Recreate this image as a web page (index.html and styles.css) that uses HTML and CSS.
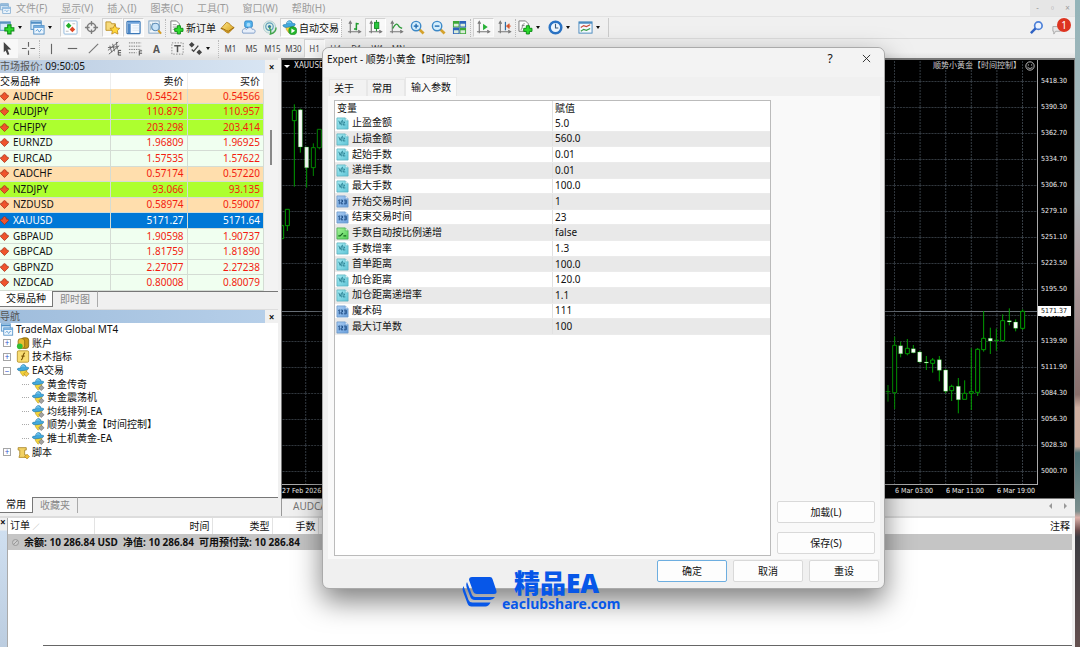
FILE: index.html
```html
<!DOCTYPE html>
<html lang="zh-CN">
<head>
<meta charset="utf-8">
<title>TradeMax Global MT4</title>
<link rel="stylesheet" href="styles.css">
</head>
<body>
<svg class="defs" aria-hidden="true">
  <defs>
    <linearGradient id="g-teal" x2="1" y2="1"><stop offset="0" stop-color="#a5eaf2"/><stop offset="1" stop-color="#5fc4d6"/></linearGradient>
    <linearGradient id="g-blue" x2="1" y2="1"><stop offset="0" stop-color="#a9cdf3"/><stop offset="1" stop-color="#6a9fdc"/></linearGradient>
    <linearGradient id="g-green" x2="1" y2="1"><stop offset="0" stop-color="#a6f29a"/><stop offset="1" stop-color="#52cf55"/></linearGradient>
    <linearGradient id="g-gold" x2="1" y2="1"><stop offset="0" stop-color="#ffe88a"/><stop offset="1" stop-color="#d39a12"/></linearGradient>
  </defs>
  <symbol id="plus" viewBox="0 0 10 10"><path d="M3.500 1h3v2.500h2.500v3h-2.500v2.500h-3v-2.500h-2.500v-3h2.500z" fill="#2edc2e" stroke="#0a8a14" stroke-width=".9"/></symbol>
  <symbol id="windows" viewBox="0 0 16 16"><rect x="1" y="1" width="11" height="9" fill="#d9ecfb" stroke="#4f8ec4"/><path d="M1 3h11" stroke="#4f8ec4" stroke-width="2"/><rect x="4" y="6" width="11" height="9" fill="#eef7ff" stroke="#4f8ec4"/><path d="M4 7.500h11" stroke="#6ba7dc" stroke-width="2"/><path d="M6 12l2-2 2 3 2-3 1 1" fill="none" stroke="#5a9ad0"/></symbol>
  <symbol id="newchart" viewBox="0 0 16 16"><rect x="0" y="2" width="11" height="9" fill="#d7eafa" stroke="#5a94c0"/><path d="M0 3h11" stroke="#5a94c0" stroke-width="2"/><use href="#plus" x="4" y="4" width="12" height="12"/></symbol>
  <symbol id="watch" viewBox="0 0 16 16"><rect x="1" y="1" width="14" height="14" rx="1" fill="#fff" stroke="#8fb8dc"/><path d="M6 3l3 3-3 3-3-3z" fill="#21b02b"/><path d="M10 7l3 3-3 3-3-3z" fill="#df4b29"/><path d="M10 4h3M3 12h3" stroke="#bbb"/></symbol>
  <symbol id="target" viewBox="0 0 16 16"><circle cx="8" cy="8" r="4.500" fill="none" stroke="#7d7d7d" stroke-width="1.600"/><path d="M8 1v5M8 10v5M1 8h5M10 8h5" stroke="#7d7d7d" stroke-width="1.400"/></symbol>
  <symbol id="favfolder" viewBox="0 0 16 16"><path d="M1 2h5l1 2h4v7h-10z" fill="#f7db7d" stroke="#be932a"/><path d="M10.500 5l1.700 3.400 3.600.500-2.600 2.500.6 3.600-3.300-1.700-3.300 1.700.6-3.600-2.600-2.500 3.700-.5z" fill="#ffd83c" stroke="#b98317" stroke-width=".8"/></symbol>
  <symbol id="navi" viewBox="0 0 16 16"><rect x="1" y="1.500" width="14" height="13" rx="1" fill="#f5faff" stroke="#3b78b8" stroke-width="1.300"/><path d="M2 3h12" stroke="#70a5dc" stroke-width="2"/><rect x="2" y="4" width="3" height="10" fill="#4f89c7"/><path d="M7 6h7M7 8.500h7M7 11h7" stroke="#dbe5f0"/></symbol>
  <symbol id="tester" viewBox="0 0 16 16"><rect x="2" y="1" width="11" height="13" fill="#f3f8fc" stroke="#7ba2c3"/><path d="M4 4v7M6 3v6" stroke="#8ab"/><circle cx="9" cy="7.500" r="4" fill="#c6e2f7" stroke="#5a8bb5" stroke-width="1.200"/><path d="M12 11l3 3.500" stroke="#d59b22" stroke-width="2.200"/></symbol>
  <symbol id="neworder" viewBox="0 0 16 16"><path d="M2 1h6l3 3v10h-9z" fill="#fff" stroke="#777"/><path d="M4 5h4M4 7.500h5M4 10h3" stroke="#999"/><use href="#plus" x="5" y="5" width="11" height="11"/></symbol>
  <symbol id="gold" viewBox="0 0 16 16"><path d="M1 9l6-6.500c4 .5 5 5 8 5.500l-6 6c-3-.5-5-4-8-5z" fill="url(#g-gold)" stroke="#a8700c" stroke-width=".8"/><path d="M1 9c4 0 5 3 8 3l6-4" fill="none" stroke="#9a6509"/></symbol>
  <symbol id="user" viewBox="0 0 16 16"><rect x="4" y="1" width="8" height="7" rx="1.500" fill="#55b5ee" stroke="#2d83c4"/><circle cx="8" cy="5" r="2" fill="#a7dcfa"/><path d="M2 14c-2-4 2-6 4-4 2-3 6-2 6 0 3-1 4 3 2 4z" fill="#e7effa" stroke="#7f9dc8"/></symbol>
  <symbol id="signal" viewBox="0 0 16 16"><circle cx="8" cy="7.500" r="6.500" fill="#dcefe6" stroke="#b3cccf"/><circle cx="8" cy="7" r="4" fill="none" stroke="#5f9dbb" stroke-width="1.300"/><circle cx="8" cy="7" r="1.700" fill="#367da0"/><path d="M8 8c1 2 2 4 1 7 4-1 6-3 6-7" fill="none" stroke="#42a64b" stroke-width="1.500"/></symbol>
  <symbol id="ea" viewBox="0 0 16 16"><path d="M4 7h9l-1 5-4 3-3-4z" fill="#f3d43c" stroke="#b38c1e" stroke-width=".6"/><path d="M1 6c1-1 3-1 4-1 0-5 6-6 7-1 2 0 3 0 3 1 0 2-4 3-7 3-4 1-7 0-7-2z" fill="#43a9dd" stroke="#1d75a8" stroke-width=".7"/><path d="M6 3c1-1 3-1 4 0" stroke="#a8e2fb" fill="none"/></symbol>
  <symbol id="autotrade" viewBox="0 0 16 16"><use href="#ea" width="15" height="15"/><circle cx="11.500" cy="11.500" r="4.300" fill="#23b52c" stroke="#118019" stroke-width=".6"/><path d="M10 9l4 2.500-4 2.500z" fill="#fff"/></symbol>
  <symbol id="eachild" viewBox="0 0 16 16"><use href="#ea" width="16" height="16"/><path d="M12 9l3.500 3-3.500 3.500-3-3.500z" fill="#a2a2a2" stroke="#666" stroke-width=".7"/></symbol>
  <symbol id="eagroup" viewBox="0 0 16 16"><use href="#ea" width="16" height="16"/><path d="M12 9l3.500 3-3.500 3.500-3-3.500z" fill="#f4ca42" stroke="#a57b15" stroke-width=".7"/></symbol>
  <symbol id="axis" viewBox="0 0 16 16"><path d="M3.500 2v12M1 12.500h13M2 4l1.500-2.500 1.500 2.500M12 11l2.500 1.500-2.500 1.500" fill="none" stroke="#7a7a7a" stroke-width="1.200"/></symbol>
  <symbol id="bars" viewBox="0 0 16 16"><use href="#axis" width="16" height="16"/><path d="M10 3v8M10 4h2.500M7.500 9.500h2.500" stroke="#229c30" stroke-width="1.600"/></symbol>
  <symbol id="candles" viewBox="0 0 16 16"><use href="#axis" width="16" height="16"/><path d="M9 0v12" stroke="#168c25"/><rect x="7" y="2.500" width="4.500" height="6.500" fill="#28c83c" stroke="#168c25"/></symbol>
  <symbol id="line" viewBox="0 0 16 16"><use href="#axis" width="16" height="16"/><path d="M4 9c3-6 5-5 6-3s2 2 4 3" fill="none" stroke="#2e9b3a" stroke-width="1.400"/></symbol>
  <symbol id="lens" viewBox="0 0 16 16"><path d="M10 10l4.500 4.500" stroke="#d7a42d" stroke-width="3"/><circle cx="6.500" cy="6.500" r="5" fill="#d5effd" stroke="#3e8ac8" stroke-width="1.500"/><path d="M4 6.500h5" stroke="#246db2" stroke-width="1.500"/></symbol>
  <symbol id="zoomin" viewBox="0 0 16 16"><use href="#lens" width="16" height="16"/><path d="M6.500 4v5" stroke="#246db2" stroke-width="1.500"/></symbol>
  <symbol id="tiles" viewBox="0 0 16 16"><path d="M1 1h7v7h-7zM8 8h7v7h-7z" fill="#3ca838"/><path d="M8 1h7v7h-7zM1 8h7v7h-7z" fill="#2d64bd"/><path d="M2 4h5v3h-5zM9 4h5v3h-5zM2 11h5v3h-5zM9 11h5v3h-5z" fill="#dceeda"/></symbol>
  <symbol id="scroll" viewBox="0 0 16 16"><use href="#axis" width="16" height="16"/><path d="M7.500 4l5 3.500-5 3.500z" fill="#28b238"/></symbol>
  <symbol id="shift" viewBox="0 0 16 16"><use href="#axis" width="16" height="16"/><path d="M9 2v9" stroke="#2e6da6" stroke-width="1.300"/><path d="M15 6.500h-3M13 4l-3 2.500 3 2.500z" fill="#d7572c" stroke="#d7572c" stroke-width=".8"/></symbol>
  <symbol id="indicator" viewBox="0 0 16 16"><path d="M1 1h7l3 3v8h-10z" fill="#fff" stroke="#777"/><path d="M7 4c-3-1-2 7-4 6M4 6h3" fill="none" stroke="#777"/><use href="#plus" x="5" y="5" width="11" height="11"/></symbol>
  <symbol id="clock" viewBox="0 0 16 16"><circle cx="8" cy="8" r="6.200" fill="#eef7ff" stroke="#2b74c5" stroke-width="2.600"/><path d="M8 4v4.500h3" fill="none" stroke="#3d5d7c" stroke-width="1.200"/></symbol>
  <symbol id="template" viewBox="0 0 16 16"><rect x="1" y="2" width="14" height="12" fill="#f5faff" stroke="#4b8cc0"/><path d="M1 3h14" stroke="#4b8cc0" stroke-width="2"/><path d="M3 8l3-2 3 1 4-2" fill="none" stroke="#c94a38" stroke-width="1.200"/><path d="M3 12l3-2 3 1 4-2" fill="none" stroke="#369d46" stroke-width="1.200"/></symbol>
  <symbol id="cursor" viewBox="0 0 16 16"><path d="M4 1l8 8h-4l2 5-2 1-2-5-2 2z" fill="#444"/></symbol>
  <symbol id="cross" viewBox="0 0 16 16"><path d="M8 1v5M8 10v5M1 8h5M10 8h5" stroke="#666" stroke-width="1.200"/></symbol>
  <symbol id="vline" viewBox="0 0 16 16"><path d="M8 3v11" stroke="#666" stroke-width="1.200"/></symbol>
  <symbol id="hline" viewBox="0 0 16 16"><path d="M3 8h10" stroke="#666" stroke-width="1.200"/></symbol>
  <symbol id="trend" viewBox="0 0 16 16"><path d="M3 13l10-10" stroke="#777" stroke-width="1.200"/></symbol>
  <symbol id="channel" viewBox="0 0 16 16"><path d="M1 10l11-9M2 14l11-9M3 5l2 7M6 3l2 8M10 1l1 8M1 7l11-1" stroke="#666"/><path d="M15 10h-3v5h3M12 12.500h3" fill="none" stroke="#444"/></symbol>
  <symbol id="fibo" viewBox="0 0 16 16"><path d="M1 2h13M1 5.500h13M1 9h13M1 12.500h8" stroke="#777" stroke-dasharray="1.500 1"/><path d="M15 10.500h-3v5M12 13h3" fill="none" stroke="#444"/></symbol>
  <symbol id="textbox" viewBox="0 0 16 16"><rect x="2" y="2" width="12" height="12" fill="none" stroke="#888" stroke-dasharray="1.500 1.500"/><path d="M4.500 5h7M8 5v7" stroke="#555" stroke-width="1.600"/></symbol>
  <symbol id="shapes" viewBox="0 0 16 16"><path d="M4 1l3 3-3 3-3-3zM12 9l3 3-3 3-3-3z" fill="#444"/><path d="M4 9l2 2 5-6" fill="none" stroke="#444" stroke-width="1.400"/></symbol>
  <symbol id="down" viewBox="0 0 10 10"><path d="M5 .5l2 1.500v1.500h2l.5 1.500-4.500 4.500-4.500-4.500.5-1.500h2v-1.500z" fill="#f0542c" stroke="#a52a12" stroke-width=".8"/></symbol>
  <symbol id="accounts" viewBox="0 0 16 16"><rect x="6" y="1" width="9" height="13" rx="3" fill="#c79516" stroke="#80610b"/><rect x="2" y="2" width="8" height="12" rx="3" fill="#e9bd32" stroke="#8f6c10"/><circle cx="4" cy="11.500" r="3.500" fill="#31bd35"/></symbol>
  <symbol id="func" viewBox="0 0 16 16"><rect x="1" y="1" width="14" height="14" rx="1.500" fill="#f8dd72" stroke="#b28b23"/><path d="M10.500 4c-3-1-2 8-5 8M6 7.500h4" fill="none" stroke="#7d5708" stroke-width="1.400"/></symbol>
  <symbol id="script" viewBox="0 0 16 16"><path d="M2 2h10v3h-2v6h2l1 3h-10l1-3v-6h-2z" fill="#f2d265" stroke="#a98424"/><path d="M13 10l3 3-3 3-3-3z" fill="#f0bd33" stroke="#a37b15" stroke-width=".7"/></symbol>
  <symbol id="v-real" viewBox="0 0 14 14"><path d="M1 1h9l3 3v9h-12z" fill="url(#g-teal)" stroke="#58afbd" stroke-width=".8"/><path d="M10 1v3h3" fill="#e9fbfd" stroke="#58afbd" stroke-width=".6"/><path d="M3 4l1.500 4 1.500-4M7 3l-1 6M7.500 5.500h2l-2 3h2.500" fill="none" stroke="#237a8b" stroke-width=".9"/></symbol>
  <symbol id="v-int" viewBox="0 0 14 14"><path d="M1 1h9l3 3v9h-12z" fill="url(#g-blue)" stroke="#6595c8" stroke-width=".8"/><path d="M10 1v3h3" fill="#edf5ff" stroke="#6595c8" stroke-width=".6"/><path d="M2.500 6l1-1v5M5 5.500h2v2h-1.500v2h2M8.500 5.500h2.500v4h-2.500M9 7.500h2" fill="none" stroke="#17457e" stroke-width="1"/></symbol>
  <symbol id="v-bool" viewBox="0 0 14 14"><path d="M1 1h9l3 3v9h-12z" fill="url(#g-green)" stroke="#3ba547" stroke-width=".8"/><path d="M10 1v3h3" fill="#eaffe7" stroke="#3ba547" stroke-width=".6"/><path d="M2.500 9.500h2l3-3M8 9.500h3" fill="none" stroke="#14641e" stroke-width="1.200"/></symbol>
</svg>

<div class="desktop">
<div class="app">
  <nav class="menubar">
    <svg class="ico"><use href="#windows"/></svg>
    <button>文件(F)</button><button>显示(V)</button><button>插入(I)</button><button>图表(C)</button><button>工具(T)</button><button>窗口(W)</button><button>帮助(H)</button>
    <div class="wincontrols"><button aria-label="最小化">-</button><button aria-label="还原">▫</button><button aria-label="关闭">×</button></div>
  </nav>

  <div class="toolbar main-tools">
    <button class="drop" aria-label="新图表"><svg class="ico"><use href="#newchart"/></svg><i></i></button>
    <button class="drop" aria-label="配置"><svg class="ico"><use href="#windows"/></svg><i></i></button>
    <button class="tool on" aria-label="市场报价"><svg class="ico"><use href="#watch"/></svg></button>
    <button class="tool" aria-label="数据窗口"><svg class="ico"><use href="#target"/></svg></button>
    <button class="tool on" aria-label="导航"><svg class="ico"><use href="#favfolder"/></svg></button>
    <button class="tool on" aria-label="终端"><svg class="ico"><use href="#navi"/></svg></button>
    <button class="tool" aria-label="测试"><svg class="ico"><use href="#tester"/></svg></button>
    <span class="sep"></span>
    <button class="wide"><svg class="ico"><use href="#neworder"/></svg>新订单</button>
    <button class="tool" aria-label="黄金"><svg class="ico"><use href="#gold"/></svg></button>
    <button class="tool" aria-label="账户"><svg class="ico"><use href="#user"/></svg></button>
    <button class="tool" aria-label="信号"><svg class="ico"><use href="#signal"/></svg></button>
    <button class="wide on"><svg class="ico"><use href="#autotrade"/></svg>自动交易</button>
    <span class="sep"></span>
    <button class="tool" aria-label="柱状图"><svg class="ico"><use href="#bars"/></svg></button>
    <button class="tool on" aria-label="蜡烛图"><svg class="ico"><use href="#candles"/></svg></button>
    <button class="tool" aria-label="折线图"><svg class="ico"><use href="#line"/></svg></button>
    <button class="tool" aria-label="放大"><svg class="ico"><use href="#zoomin"/></svg></button>
    <button class="tool" aria-label="缩小"><svg class="ico"><use href="#lens"/></svg></button>
    <button class="tool" aria-label="平铺"><svg class="ico"><use href="#tiles"/></svg></button>
    <span class="sep"></span>
    <button class="tool on" aria-label="自动滚动"><svg class="ico"><use href="#scroll"/></svg></button>
    <button class="tool" aria-label="平移"><svg class="ico"><use href="#shift"/></svg></button>
    <span class="sep"></span>
    <button class="drop" aria-label="指标"><svg class="ico"><use href="#indicator"/></svg><i></i></button>
    <button class="drop" aria-label="周期"><svg class="ico"><use href="#clock"/></svg><i></i></button>
    <button class="drop" aria-label="模板"><svg class="ico"><use href="#template"/></svg><i></i></button>
    <span class="end"></span>
    <div class="alerts">
      <button aria-label="搜索"><svg class="ico" viewBox="0 0 16 16"><circle cx="10" cy="6" r="4" fill="#edf4ff" stroke="#4d80d8" stroke-width="1.800"/><path d="M7 9l-5 5" stroke="#2f62c4" stroke-width="2.600"/></svg></button>
      <button class="bell" aria-label="通知"><svg class="ico" viewBox="0 0 16 16"><path d="M2 7h8v5h-5l-2 3v-3h-1z" fill="#e8e8e8" stroke="#aaa"/></svg><span class="badge">1</span></button>
    </div>
  </div>

  <div class="toolbar draw-tools">
    <button class="first" aria-label="光标"><svg class="ico"><use href="#cursor"/></svg></button>
    <button class="tool" aria-label="十字"><svg class="ico"><use href="#cross"/></svg></button>
    <span class="sep thin"></span>
    <button class="tool" aria-label="垂直线"><svg class="ico"><use href="#vline"/></svg></button>
    <button class="tool" aria-label="水平线"><svg class="ico"><use href="#hline"/></svg></button>
    <button class="tool" aria-label="趋势线"><svg class="ico"><use href="#trend"/></svg></button>
    <button class="tool" aria-label="通道"><svg class="ico"><use href="#channel"/></svg></button>
    <button class="tool" aria-label="斐波那契"><svg class="ico"><use href="#fibo"/></svg></button>
    <button class="tool letter">A</button>
    <button class="tool" aria-label="文字标签"><svg class="ico"><use href="#textbox"/></svg></button>
    <button class="drop" aria-label="箭头"><svg class="ico"><use href="#shapes"/></svg><i></i></button>
    <span class="sep thin"></span>
    <button class="tool tf">M1</button><button class="tool tf">M5</button><button class="tool tf">M15</button><button class="tool tf">M30</button><button class="tool tf on">H1</button><button class="tool tf">H4</button><button class="tool tf">D1</button><button class="tool tf">W1</button><button class="tool tf">MN</button>
  </div>

  <main class="workspace">
    <aside class="side">
      <section class="market">
        <header class="ptitle"><span>市场报价: <b>09:50:05</b></span><button aria-label="关闭">×</button></header>
        <div class="mbody">
          <table class="quotes">
            <thead><tr><th>交易品种</th><th>卖价</th><th>买价</th></tr></thead>
            <tbody>
              <tr class="peach"><td><svg><use href="#down"/></svg>AUDCHF</td><td>0.54521</td><td>0.54566</td></tr>
              <tr class="lime"><td><svg><use href="#down"/></svg>AUDJPY</td><td>110.879</td><td>110.957</td></tr>
              <tr class="lime"><td><svg><use href="#down"/></svg>CHFJPY</td><td>203.298</td><td>203.414</td></tr>
              <tr><td><svg><use href="#down"/></svg>EURNZD</td><td>1.96809</td><td>1.96925</td></tr>
              <tr><td><svg><use href="#down"/></svg>EURCAD</td><td>1.57535</td><td>1.57622</td></tr>
              <tr class="peach"><td><svg><use href="#down"/></svg>CADCHF</td><td>0.57174</td><td>0.57220</td></tr>
              <tr class="lime"><td><svg><use href="#down"/></svg>NZDJPY</td><td>93.066</td><td>93.135</td></tr>
              <tr class="peach"><td><svg><use href="#down"/></svg>NZDUSD</td><td>0.58974</td><td>0.59007</td></tr>
              <tr class="sel"><td><svg><use href="#down"/></svg>XAUUSD</td><td>5171.27</td><td>5171.64</td></tr>
              <tr><td><svg><use href="#down"/></svg>GBPAUD</td><td>1.90598</td><td>1.90737</td></tr>
              <tr><td><svg><use href="#down"/></svg>GBPCAD</td><td>1.81759</td><td>1.81890</td></tr>
              <tr><td><svg><use href="#down"/></svg>GBPNZD</td><td>2.27077</td><td>2.27238</td></tr>
              <tr><td><svg><use href="#down"/></svg>NZDCAD</td><td>0.80008</td><td>0.80079</td></tr>
            </tbody>
          </table>
          <div class="scroll"><span></span></div>
        </div>
        <div class="ptabs"><button class="cur">交易品种</button><button>即时图</button></div>
      </section>
      <section class="navigator">
        <header class="ptitle deep"><span>导航</span><button aria-label="关闭">×</button></header>
        <ul class="tree">
          <li class="root"><svg><use href="#windows"/></svg>TradeMax Global MT4</li>
          <li class="l1"><em>+</em><svg><use href="#accounts"/></svg>账户</li>
          <li class="l1"><em>+</em><svg><use href="#func"/></svg>技术指标</li>
          <li class="l1"><em>−</em><svg><use href="#eagroup"/></svg>EA交易</li>
          <li class="l2"><svg><use href="#eachild"/></svg>黄金传奇</li>
          <li class="l2"><svg><use href="#eachild"/></svg>黄金震荡机</li>
          <li class="l2"><svg><use href="#eachild"/></svg>均线排列-EA</li>
          <li class="l2"><svg><use href="#eachild"/></svg>顺势小黄金【时间控制】</li>
          <li class="l2 last"><svg><use href="#eachild"/></svg>推土机黄金-EA</li>
          <li class="l1"><em>+</em><svg><use href="#script"/></svg>脚本</li>
        </ul>
        <div class="ptabs"><button class="cur">常用</button><button>收藏夹</button></div>
      </section>
    </aside>

    <section class="chartpane">
      <div class="chart">
        <div class="plot">
          <svg class="candlesvg" viewBox="282 60 756 424" preserveAspectRatio="xMaxYMin slice">
            <defs>
              <pattern id="grid" x="895" y="81" width="25.600" height="26" patternUnits="userSpaceOnUse"><path d="M0 .5H25.600M.5 0V26" fill="none" stroke="#353c43" stroke-dasharray="2 1"/></pattern>
            </defs>
            <rect x="282" y="60" width="756" height="424" fill="url(#grid)"/>
            <path d="M282 311.500h756" stroke="#697078"/>
            <g transform="translate(880 290) scale(.3333)">
              <path class="wick" d="M27 285V335M47 140V166M47 308V357M65 155V202M85 147V175M85 191V196M103 165V190M122 183V218M142 198V240M161 204V210M161 220V248M181 198V274M200 238V310M218 284V289M218 302V333M238 264V370M257 271V310M277 175V305M277 310V360M296 174V178M296 307V318M314 63V145M314 179V185M334 113V192M352 116V182M371 73V92M371 152V155M391 55V106M410 88V124M431 58V64M431 115V120M20 305H34M345 151H360"/>
              <path class="hollow" d="M41 166h12V308h-12zM79 175h12v16h-12zM155 210h12v10h-12zM212 289h12v13h-12zM251 310h12v18h-12zM271 305h12v5h-12zM290 178h12v129h-12zM308 145h12v34h-12zM365 92h12v60h-12zM425 64h12v51h-12z"/>
              <path class="solid" d="M59 167h12v24h-12zM97 176h12v12h-12zM116 186h12v30h-12zM136 216h12v3h-12zM175 209h12v32h-12zM194 240h12v64h-12zM232 289h12v40h-12zM328 145h12v8h-12zM385 92h12v4h-12zM404 96h12v19h-12z"/>
            </g>
            <g transform="translate(278 56) scale(.3333)">
              <path class="wick" d="M52 145V163M52 194V392M70 158V290M89 273V395M109 262V275M109 335V360M127 275V280M31 509V525M14 505V509"/>
              <path class="hollow" d="M46 163h12v31h-12zM103 275h12v60h-12zM121 220h12v55h-12zM25 460h12v49h-12zM12 509h8v39h-8z"/>
              <path class="solid" d="M64 161h12v112h-12zM83 273h12v62h-12z"/>
            </g>
          </svg>
          <div class="chead"><span class="sym"><i></i>XAUUSD,</span><span class="expert">顺势小黄金【时间控制】<svg viewBox="0 0 12 12"><circle cx="6" cy="6" r="5" fill="none" stroke="#ddd"/><path d="M4 4v1.500M8 4v1.500M3 7c1 2.500 5 2.500 6 0" fill="none" stroke="#ddd"/></svg></span></div>
        </div>
        <div class="prices">
          <span>5418.30</span><span>5390.30</span><span>5362.70</span><span>5334.70</span><span>5306.70</span><span>5279.10</span><span>5251.10</span><span>5223.50</span><span>5195.50</span><span>5167.50</span><span>5139.90</span><span>5111.90</span><span>5084.30</span><span>5056.30</span><span>5028.30</span><span>5000.70</span>
          <b class="now">5171.37</b>
        </div>
        <div class="times"><span>27 Feb 2026</span><span class="push">6 Mar 03:00</span><span>6 Mar 11:00</span><span>6 Mar 19:00</span></div>
      </div>
      <div class="ctabs"><span>AUDCAD</span><div class="arrows"><button aria-label="向左"><i class="left"></i></button><button aria-label="向右"><i class="right"></i></button></div></div>
    </section>
  </main>

  <section class="terminal">
    <div class="tstrip"><button aria-label="关闭">×</button></div>
    <div class="tbody">
      <table class="orders">
        <thead><tr><th class="c1">订单 <small>∕</small></th><th class="c2">时间</th><th class="c3">类型</th><th class="c4">手数</th><th>注释</th></tr></thead>
        <tbody><tr><td colspan="5"><i class="dot"></i>余额: 10 286.84 USD&nbsp; 净值: 10 286.84&nbsp; 可用预付款: 10 286.84</td></tr></tbody>
      </table>
      <div class="tfoot"></div>
    </div>
  </section>

  <section class="dialog" role="dialog" aria-label="Expert">
    <header class="dtitle"><span>Expert - 顺势小黄金【时间控制】</span><button aria-label="帮助">?</button><button aria-label="关闭"><svg viewBox="0 0 10 10"><path d="M1 1l8 8M9 1l-8 8" stroke="#222"/></svg></button></header>
    <div class="dtabs"><button>关于</button><button>常用</button><button class="cur">输入参数</button></div>
    <div class="dpage">
      <div class="list">
        <table class="params">
          <thead><tr><th>变量</th><th>赋值</th></tr></thead>
          <tbody>
            <tr><td><svg><use href="#v-real"/></svg>止盈金额</td><td>5.0</td></tr>
            <tr><td><svg><use href="#v-real"/></svg>止损金额</td><td>560.0</td></tr>
            <tr><td><svg><use href="#v-real"/></svg>起始手数</td><td>0.01</td></tr>
            <tr><td><svg><use href="#v-real"/></svg>递增手数</td><td>0.01</td></tr>
            <tr><td><svg><use href="#v-real"/></svg>最大手数</td><td>100.0</td></tr>
            <tr><td><svg><use href="#v-int"/></svg>开始交易时间</td><td>1</td></tr>
            <tr><td><svg><use href="#v-int"/></svg>结束交易时间</td><td>23</td></tr>
            <tr><td><svg><use href="#v-bool"/></svg>手数自动按比例递增</td><td>false</td></tr>
            <tr><td><svg><use href="#v-real"/></svg>手数增率</td><td>1.3</td></tr>
            <tr><td><svg><use href="#v-real"/></svg>首单距离</td><td>100.0</td></tr>
            <tr><td><svg><use href="#v-real"/></svg>加仓距离</td><td>120.0</td></tr>
            <tr><td><svg><use href="#v-real"/></svg>加仓距离递增率</td><td>1.1</td></tr>
            <tr><td><svg><use href="#v-int"/></svg>魔术码</td><td>111</td></tr>
            <tr><td><svg><use href="#v-int"/></svg>最大订单数</td><td>100</td></tr>
          </tbody>
        </table>
      </div>
      <div class="sidebtns"><button class="btn">加载(L)</button><button class="btn">保存(S)</button></div>
    </div>
    <footer class="dfoot"><button class="btn primary">确定</button><button class="btn">取消</button><button class="btn">重设</button></footer>
  </section>

  <div class="brand">
    <svg viewBox="0 0 36 32"><path d="M11 1h18q2 0 2.500 2l4 12q.500 3-2.500 3h-17q-3 0-4-3l-4-11q0-3 3-3z"/><path d="M6 6l5 13q1 2 3 2h20q-2 3-5 3h-15q-4 0-5-4l-3.500-9q-1-3 .5-5z"/><path d="M2.500 10l5 14q1 2.500 4 2.500h18q-2 4-5 4h-14q-3 0-4-3l-4.500-12q-1-3 .5-5.500z"/></svg>
    <div><strong>精品EA</strong><span>eaclubshare.com</span></div>
  </div>
</div>
<div class="wallpaper"></div>
</div>
</body>
</html>
```

FILE: styles.css
```css
* { box-sizing: border-box; }
body {
  margin: 0;
  font: 10px/14px "Noto Sans", "Noto Sans CJK SC", sans-serif;
  color: #111;
  background: #f0f0f0;
}
button {
  font: inherit;
  color: inherit;
  background: none;
  border: 0;
  padding: 0;
  white-space: nowrap;
}
table { border-collapse: collapse; table-layout: fixed; }
th { font-weight: 400; text-align: left; }
.defs { position: absolute; width: 0; height: 0; }
.ico { width: 15px; height: 15px; flex: none; display: block; }
.desktop { display: flex; min-height: 100vh; overflow: hidden; }
.app { flex: 1; min-width: 0; display: flex; flex-direction: column; position: relative; }
.wallpaper {
  width: 5px;
  background: linear-gradient(#93b4b9 0, #b1b9bc 31%, #b3a2a5 40%, #8d7675 58%, #8a706b 61%, #d0b0a2 63%, #cfae9f 69%, #4d7175 70%, #7b8e8d 79%, #dcb1aa 80%, #694b4b 82%, #3b3c42 83%, #64504f 100%);
}

.menubar { height: 17px; display: flex; align-items: center; gap: 14px; color: #9b9b9b; background: #f1f1f1; border-bottom: 1px solid #e2e2e2; }
.menubar .ico { width: 11px; margin-right: -9px; opacity: .8; }
.wincontrols { margin-left: auto; display: flex; align-self: stretch; background: #e6e6e6; }
.wincontrols button { width: 15px; font-size: 8px; line-height: 14px; }

.toolbar { display: flex; align-items: center; background: #f0f0f0; }
.toolbar button { display: flex; align-items: center; justify-content: center; }
.main-tools { height: 21px; }
.draw-tools { height: 20px; background: linear-gradient(#f0f0f0 70%, #e2e2e2); border-top: 1px solid #dcdcdc; }
.toolbar .tool { width: 21px; height: 19px; flex: none; }
.toolbar .first { width: 18px; height: 19px; background: #f8f8f8; justify-content: flex-start; }
.toolbar .on { background: #f9f9f9; border: 1px solid; border-color: #d2d2d2 #fff #fff #d2d2d2; }
.toolbar .drop { width: 30px; justify-content: flex-start; gap: 3px; }
.drop i { border: 2px solid transparent; border-top: 3px solid #111; border-bottom: 0; }
.toolbar .wide { height: 19px; gap: 2px; padding: 0 1px; }
.sep { width: 3px; height: 18px; border-left: 1px dotted #bbb; flex: none; }
.sep.thin { width: 2px; }
.end { height: 19px; border-left: 1px solid #ccc; }
.letter { font-weight: 700; color: #555; }
.tf { font-size: 8px; color: #444; }
.alerts { margin-left: auto; display: flex; gap: 7px; padding-right: 4px; }
.bell { position: relative; width: 20px; }
.toolbar .bell { justify-content: flex-start; }
.badge { position: absolute; top: -2px; right: 0; width: 14px; height: 14px; border-radius: 7px; background: #dd3420; color: #fff; line-height: 14px; }

.workspace { display: flex; }
.side { width: 278px; flex: none; display: flex; flex-direction: column; border-top: 2px solid #e1e1e1; }
.ptitle { height: 13px; line-height: 12px; display: flex; justify-content: space-between; color: #555; }
.ptitle span { flex: 1; background: linear-gradient(90deg, #b9cbe0, #d8e5f3); }
.ptitle.deep span { background: linear-gradient(90deg, #9fbddc, #b6cfe9); }
.ptitle b { font-weight: 400; color: #111; }
.ptitle button { width: 13px; font-weight: 700; color: #111; line-height: 12px; }
.mbody { display: flex; background: #fff; }
.quotes { flex: 1; height: 218px; }
.quotes th, .quotes td { padding: 0 3px; border-right: 1px solid #d4dcd4; border-bottom: 1px solid #d4dcd4; line-height: 13px; text-align: right; }
.quotes th { height: 16px; border-bottom: 0; border-color: #eee; }
.quotes th:first-child, .quotes td:first-child { width: 42%; padding-left: 0; text-align: left; color: #111; }
.quotes td { color: #f31d10; background: #f0fff0; }
.quotes td svg { width: 9px; height: 9px; margin: 0 4px 0 0; vertical-align: -1px; }
.quotes .peach td { background: #ffdead; }
.quotes .lime td { background: #adff2f; }
.quotes .sel td, .quotes .sel td:first-child { background: #0078d7; color: #fff; }
.scroll { width: 14px; background: #f3f3f3; padding: 57px 0 0 6px; }
.scroll span { display: block; width: 2px; height: 35px; background: #888; }
.ptabs { height: 16px; display: flex; align-items: stretch; background: #f0f0f0; }
.ptabs button { padding: 0 7px; border-right: 1px solid #aaa; border-top: 1px solid #777; color: #888; line-height: 13px; }
.ptabs button.cur { padding: 0 6px; background: #fff; color: #111; border: solid #777; border-width: 0 1px 1px 0; }
.ptabs::after { content: ""; flex: 1; border-top: 1px solid #777; }
.navigator { border-top: 1px solid #ddd; margin-top: 2px; }
.tree { margin: 0; padding: 0 0 38px; list-style: none; background: #fff; display: grid; grid-auto-rows: 1fr; height: 174px; }
.tree li { display: flex; align-items: center; gap: 2px; line-height: 13px; min-height: 0; }
.tree svg { width: 14px; height: 13px; }
.tree .l1 { padding-left: 3px; }
.tree .l1 svg { margin-left: 3px; }
.tree em { width: 8px; height: 8px; border: 1px solid #a5a5a5; font-style: normal; line-height: 5px; font-size: 8px; color: #35c; text-align: center; }
.tree .l2 { padding-left: 22px; }
.tree .l2::before { content: ""; width: 7px; border-top: 1px dotted #aaa; }

.chartpane { flex: 1; min-width: 0; margin-left: 3px; display: flex; flex-direction: column; }
.chart { background: #000; border: 1px solid #777; border-top: 2px solid #777; display: grid; grid-template-columns: 1fr 36px; color: #f2f2f2; font: 7px/10px "DejaVu Sans Condensed", "Noto Sans", "Noto Sans CJK SC", sans-serif; }
.plot { position: relative; height: 425px; border-right: 1px solid #aaa; border-bottom: 1px solid #aaa; overflow: hidden; }
.candlesvg { display: block; width: 100%; height: 100%; }
.wick { stroke: #00a000; stroke-width: 3; }
.hollow { fill: #000; stroke: #00a000; stroke-width: 3; }
.solid { fill: #fff; stroke: #00c000; stroke-width: 1; }
.chead { position: absolute; inset: 1px 2px auto 2px; display: flex; justify-content: space-between; font-size: 8px; }
.sym, .expert { display: flex; align-items: center; gap: 4px; }
.sym i { border: 3px solid transparent; border-top-color: #fff; border-bottom: 0; }
.expert svg { width: 10px; height: 10px; }
.expert { font-family: "Liberation Serif", "Noto Sans CJK SC", serif; color: #ccc; }
.prices { position: relative; padding: 16px 0 0 3px; display: flex; flex-direction: column; gap: 16px; }
.prices span { height: 10px; }
.now { position: absolute; left: 0; right: 3px; top: 246px; height: 10px; padding-left: 3px; font-weight: 400; background: #fff; color: #111; }
.times { grid-column: 1 / -1; display: flex; height: 13px; line-height: 12px; padding-right: 26px; }
.times span { width: 51px; white-space: nowrap; }
.times .push { margin-left: auto; }
.ctabs { height: 17px; display: flex; align-items: center; justify-content: space-between; padding: 0 4px 3px 11px; color: #777; border-left: 1px solid #999; background: #f0f0f0; }
.arrows { display: flex; gap: 4px; }
.arrows button { width: 11px; height: 12px; display: grid; place-items: center; }
.arrows i { border: 3px solid transparent; }
.arrows .left { border-right-color: #999; border-left: 0; }
.arrows .right { border-left-color: #999; border-right: 0; }

.terminal { flex: 1; display: flex; border-top: 2px solid #ddd; }
.tstrip { width: 7px; background: linear-gradient(#f0f0f0 12px, #cfdff0 13px, #bccde0); }
.tstrip button { display: block; font-weight: 700; line-height: 9px; }
.tbody { flex: 1; background: #fff; border-left: 1px solid #aaa; margin-right: 3px; display: flex; flex-direction: column; }
.orders { width: 100%; }
.orders th { height: 16px; padding: 0 2px; text-align: right; border-right: 1px solid #e3e3e3; line-height: 14px; }
.orders th:last-child { border: 0; }
.orders th.c1 { width: 86px; text-align: left; }
.orders .c2 { width: 118px; }
.orders .c3 { width: 60px; }
.orders .c4 { width: 46px; }
.orders small { font-size: 7px; color: #aaa; }
.orders td { height: 16px; padding: 0 4px; background: #c5c5c5; font-weight: 700; line-height: 14px; }
.dot { display: inline-block; width: 7px; height: 7px; margin-right: 5px; border: 1px solid #999; border-radius: 4px; background: linear-gradient(135deg, #ccc 42%, #999 45%, #999 55%, #ccc 58%); }
.tfoot { margin: auto 0 0 35px; height: 2px; border-top: 1px solid #666; }

.dialog { position: absolute; left: 322px; right: 190px; top: 47px; padding: 0 5px 6px; display: flex; flex-direction: column; background: #f0f0f0; border: 1px solid #aaa; border-radius: 7px; box-shadow: 0 12px 28px rgba(0, 0, 0, .5); }
.dtitle { height: 29px; margin: 0 -5px; padding-left: 4px; display: flex; background: #f3f3f3; border-radius: 7px 7px 0 0; }
.dtitle span { flex: 1; line-height: 22px; }
.dtitle button { width: 36px; height: 22px; font-size: 12px; }
.dtitle svg { width: 9px; height: 9px; }
.dtabs { display: flex; align-items: flex-end; padding-left: 1px; }
.dtabs button { height: 17px; padding: 0 12px 0 4px; line-height: 15px; border: 1px solid #e7e7e7; border-bottom: 0; background: #f2f2f2; }
.dtabs .cur { height: 19px; padding: 0 5px; background: #fafafa; }
.dpage { margin-right: -1px; padding: 4px 5px 3px 6px; display: flex; gap: 6px; background: #f9f9f9; }
.list { flex: 1; height: 456px; border: 1px solid #bbb; background: #fff; }
.params { width: 100%; height: 234px; }
.params th, .params td { padding: 0 2px; line-height: 13px; border-bottom: 1px solid #ebebeb; }
.params th { height: 15px; border-bottom: 0; }
.params td:first-child, .params th:first-child { width: 50%; border-right: 1px solid #e1e1e1; }
.params td:first-child { padding-left: 1px; }
.params tbody tr:nth-child(even) { background: #e9e9e9; }
.params svg { width: 13px; height: 13px; margin-right: 3px; vertical-align: middle; }
.sidebtns { width: 98px; display: flex; flex-direction: column; justify-content: flex-end; gap: 9px; padding-bottom: 2px; }
.btn { height: 22px; background: #fdfdfd; border: 1px solid #d9d9d9; border-radius: 2px; }
.dfoot { display: flex; justify-content: flex-end; gap: 6px; padding-top: 1px; }
.dfoot .btn { width: 70px; }
.dfoot .primary { border-color: #6daee0; }

.brand { position: absolute; left: 461px; top: 570px; display: flex; align-items: center; gap: 5px; color: #0757e8; font-weight: 700; }
.brand > svg { width: 36px; height: 32px; fill: #0757e8; margin-top: 3px; }
.brand div { display: flex; flex-direction: column; }
.brand strong { font-size: 26px; line-height: 27px; padding-left: 12px; }
.brand span { font-size: 14px; line-height: 14px; }
```
